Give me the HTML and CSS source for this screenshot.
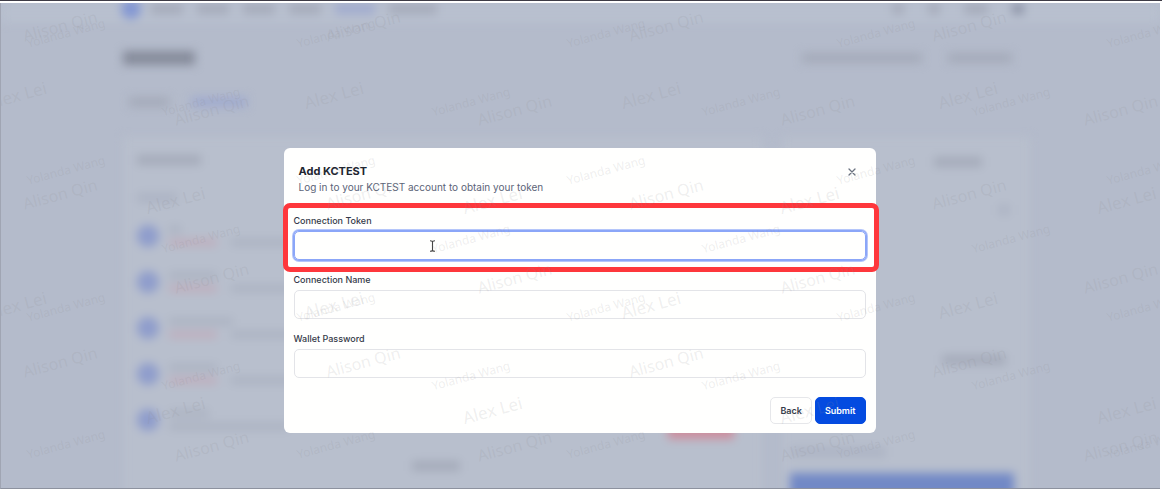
FILE: index.html
```html
<!DOCTYPE html>
<html lang="en">
<head>
    <meta charset="utf-8">
    <title>Add KCTEST</title>
    <link rel="stylesheet" href="styles.css">
</head>
<body>
    <div class="screen">
        <div class="page" aria-hidden="true">
            <div class="nav">
                <i class="logo"></i>
                <div class="nav-links">
                    <i class="bar w-32"></i>
                    <i class="bar w-32"></i>
                    <i class="bar w-32"></i>
                    <i class="bar w-32"></i>
                    <i class="bar blue w-40"></i>
                    <i class="bar w-48"></i>
                </div>
                <div class="nav-icons">
                    <i class="bar w-12"></i>
                    <i class="bar w-12"></i>
                    <i class="bar w-24"></i>
                    <i class="bar dark w-12"></i>
                </div>
            </div>
            <div class="title-row">
                <i class="bar title"></i>
                <div class="actions">
                    <i class="bar w-120"></i>
                    <i class="bar w-64"></i>
                </div>
            </div>
            <div class="tabs">
                <i class="bar w-40"></i>
                <i class="bar blue w-56"></i>
            </div>
            <div class="columns">
                <div class="card list">
                    <i class="bar w-64"></i>
                    <i class="bar faint w-40 sub"></i>
                    <div class="row"><i class="avatar"></i><div class="lines"><i class="bar w-12"></i><div class="meta"><i class="bar red w-48"></i><i class="bar w-64"></i></div></div></div>
                    <div class="row"><i class="avatar"></i><div class="lines"><i class="bar w-48"></i><div class="meta"><i class="bar red w-48"></i><i class="bar w-64"></i></div></div></div>
                    <div class="row"><i class="avatar"></i><div class="lines"><i class="bar w-64"></i><div class="meta"><i class="bar red w-48"></i><i class="bar w-64"></i></div></div></div>
                    <div class="row"><i class="avatar"></i><div class="lines"><i class="bar w-48"></i><div class="meta"><i class="bar red w-48"></i><i class="bar w-64"></i></div></div></div>
                    <div class="row"><i class="avatar"></i><div class="lines"><i class="bar w-40"></i><div class="meta"><i class="bar w-120"></i></div></div><i class="danger"></i></div>
                    <i class="bar w-48 pager"></i>
                </div>
                <div class="card side">
                    <i class="bar w-48 side-title"></i>
                    <i class="bar faint w-12 side-mark"></i>
                    <i class="bar w-64 side-value"></i>
                    <i class="bar faint w-96 side-note"></i>
                    <i class="cta"></i>
                </div>
            </div>
        </div>

        <div class="overlay">
            <form class="modal" role="dialog" aria-labelledby="modal-title">
                <div class="modal-header">
                    <div>
                        <h2 id="modal-title">Add KCTEST</h2>
                        <p>Log in to your KCTEST account to obtain your token</p>
                    </div>
                    <button type="button" class="close" aria-label="Close">
                        <svg width="8" height="8" viewBox="0 0 8 8"><path d="M1 1l6 6M7 1l-6 6" stroke="#6b7280" stroke-width="1.3" stroke-linecap="round"/></svg>
                    </button>
                </div>

                <div class="field highlight">
                    <label for="token">Connection Token</label>
                    <input type="text" id="token" class="focused">
                    <svg class="cursor" width="7" height="12" viewBox="0 0 7 12"><path d="M1 .7c1.5 0 2.5.2 2.5 1.300 0-1.100 1-1.300 2.500-1.300M3.500 2v8M1 11.300c1.500 0 2.500-.2 2.500-1.300 0 1.100 1 1.300 2.500 1.300" fill="none" stroke="#444" stroke-width="1.1"/></svg>
                </div>
                <div class="field">
                    <label for="name">Connection Name</label>
                    <input type="text" id="name">
                </div>
                <div class="field">
                    <label for="password">Wallet Password</label>
                    <input type="password" id="password">
                </div>

                <div class="modal-footer">
                    <button type="button" class="btn">Back</button>
                    <button type="submit" class="btn primary">Submit</button>
                </div>
            </form>
        </div>

        <svg class="watermark" id="watermark"></svg>
    </div>

    <script src="watermark.js"></script>
</body>
</html>
```
FILE: styles.css
```css
* {
    box-sizing: border-box;
}

body {
    margin: 0;
    font-family: Inter, sans-serif;
    background-color: #fff;
    border-top: 1px solid #3d3b45;
}

.screen {
    position: relative;
    height: calc(100vh - 3px);
    margin: 2px 2px 0 0;
    background-color: #b4bbcb;
    border-left: 1px solid #a0a5b3;
    border-bottom: 1px solid #8d929f;
    overflow: hidden;
}

/* blurred page behind the dialog */
.page {
    filter: blur(5px);
}

.nav {
    display: flex;
    align-items: center;
    height: 20px;
    padding: 0 136px 8px 120px;
    background-color: #b8c0cf;
}

.logo {
    width: 20px;
    height: 20px;
    border-radius: 50%;
    background-color: #8397d3;
}

.nav-links {
    display: flex;
    gap: 14px;
    margin-left: 10px;
}

.nav-icons {
    display: flex;
    gap: 24px;
    margin-left: auto;
}

.bar {
    display: block;
    height: 10px;
    background-color: #a5abba;
}

.dark {
    background-color: #8c93a6;
}

.blue {
    background-color: #a0abcf;
}

.red {
    background-color: #bfadbc;
}

.faint {
    background-color: #adb4c4;
}

.w-12 { width: 12px; }
.w-24 { width: 24px; }
.w-32 { width: 32px; }
.w-40 { width: 40px; }
.w-48 { width: 48px; }
.w-56 { width: 56px; }
.w-64 { width: 64px; }
.w-96 { width: 96px; }
.w-120 { width: 120px; }

.title-row {
    display: flex;
    align-items: center;
    justify-content: space-between;
    padding: 28px 148px 0 122px;
}

.title {
    width: 72px;
    height: 14px;
    background-color: #868c9b;
}

.actions {
    display: flex;
    gap: 26px;
}

.tabs {
    display: flex;
    gap: 22px;
    padding: 32px 122px 0 128px;
}

.columns {
    display: flex;
    gap: 20px;
    padding: 30px 130px 0 122px;
}

.card {
    height: 380px;
    background-color: #b8bfcd;
}

.list {
    flex: 1;
    padding: 18px 28px 0 14px;
}

.sub {
    margin: 28px 0 10px;
}

.row {
    display: flex;
    align-items: center;
    gap: 10px;
    height: 46px;
}

.avatar {
    width: 22px;
    height: 22px;
    border-radius: 50%;
    background-color: #8f9dcc;
}

.lines .bar {
    height: 7px;
    background-color: #abb2c1;
}

.lines .red {
    background-color: #bfadbc;
}

.meta {
    display: flex;
    gap: 14px;
    margin-top: 6px;
}

.danger {
    align-self: flex-end;
    width: 66px;
    height: 20px;
    margin: 0 0 4px auto;
    background-color: #cc8e9e;
}

.pager {
    margin: 18px auto 0;
}

.side {
    width: 248px;
    padding: 20px 16px 0 8px;
}

.side-title {
    margin-left: 144px;
}

.side-mark {
    margin: 38px 0 0 208px;
}

.side-value {
    margin: 140px 0 0 152px;
}

.side-note {
    margin-top: 82px;
}

.cta {
    display: block;
    height: 40px;
    margin-top: 16px;
    background-color: #7289c6;
}

/* dialog */
.overlay {
    position: absolute;
    inset: 0;
    padding: 145px 2px 0 0;
}

.modal {
    width: 592px;
    max-width: 100%;
    margin: 0 auto;
    padding: 16px 10px 9px;
    background-color: #fffffe;
    border-radius: 6px;
}

.modal-header {
    display: flex;
    align-items: flex-start;
    justify-content: space-between;
    padding: 0 10px 0 5px;
    margin-bottom: 21px;
}

h2 {
    margin: 0;
    font-size: 11px;
    line-height: 14px;
    font-weight: 700;
    color: #20242f;
}

.modal-header p {
    margin: 2px 0 0;
    font-size: 10px;
    line-height: 14px;
    color: #5c6478;
}

.close {
    display: flex;
    padding: 4px 0;
    border: none;
    background: none;
    cursor: pointer;
}

.field {
    position: relative;
    margin-bottom: 14px;
}

label {
    display: block;
    margin-bottom: 4px;
    font-size: 9px;
    line-height: 12px;
    font-weight: 500;
    color: #343a49;
}

input {
    display: block;
    width: 100%;
    height: 29px;
    padding: 0 8px;
    border: 1px solid #e3e4e8;
    border-radius: 5px;
    background: none;
    font-family: inherit;
    font-size: 10px;
    outline: none;
}

.focused {
    border-color: #8ba6f8;
    box-shadow: 0 0 0 1px #8ba6f8, 0 0 0 2px #b5c6fa;
}

.highlight::after {
    content: "";
    position: absolute;
    inset: -12px -13px -12px -11px;
    border: 5px solid #fe373c;
    border-radius: 7px;
    pointer-events: none;
}

.cursor {
    position: absolute;
    left: 135px;
    bottom: 8px;
}

.modal-footer {
    display: flex;
    justify-content: flex-end;
    gap: 3px;
    padding-top: 5px;
}

.btn {
    height: 27px;
    padding: 0 9px;
    border: 1px solid #e6e7ea;
    border-radius: 5px;
    background: #fffffe;
    font-family: inherit;
    font-size: 9px;
    font-weight: 600;
    color: #343a49;
    cursor: pointer;
}

.primary {
    border-color: #044be0;
    background-color: #044be0;
    color: #fff;
}

.watermark {
    position: absolute;
    inset: 0;
    width: 100%;
    height: 100%;
    pointer-events: none;
}

.watermark text {
    font-family: "Noto Sans", sans-serif;
    text-anchor: middle;
    dominant-baseline: central;
    fill: #8c8c92;
    fill-opacity: 0.15;
}
```
FILE: watermark.js
```javascript
// each name repeats on its own staggered grid
const marks = [
    { name: "Yolanda Wang", x: 65, y: 30, stepX: 270, stepY: 137, size: 12 },
    { name: "Alison Qin", x: 59, y: 23, stepX: 303, stepY: 168, size: 16 },
    { name: "Alex Lei", x: 16, y: 92, stepX: 317, stepY: 210, size: 17 }
];

const layer = document.getElementById("watermark");

function addMark(mark, x, y) {
    const text = document.createElementNS("http://www.w3.org/2000/svg", "text");
    text.textContent = mark.name;
    text.setAttribute("font-size", mark.size);
    text.setAttribute("transform", `translate(${x} ${y}) rotate(-15)`);
    layer.appendChild(text);
}

for (const mark of marks) {
    for (let y = mark.y; y < layer.clientHeight; y += mark.stepY) {
        for (let x = mark.x; x < layer.clientWidth; x += mark.stepX) {
            addMark(mark, x, y);
            // the staggered neighbour, unless it would start past the edge
            if (x + mark.stepX / 2 < layer.clientWidth) {
                addMark(mark, x + mark.stepX / 2, y + mark.stepY / 2);
            }
        }
    }
}
```
